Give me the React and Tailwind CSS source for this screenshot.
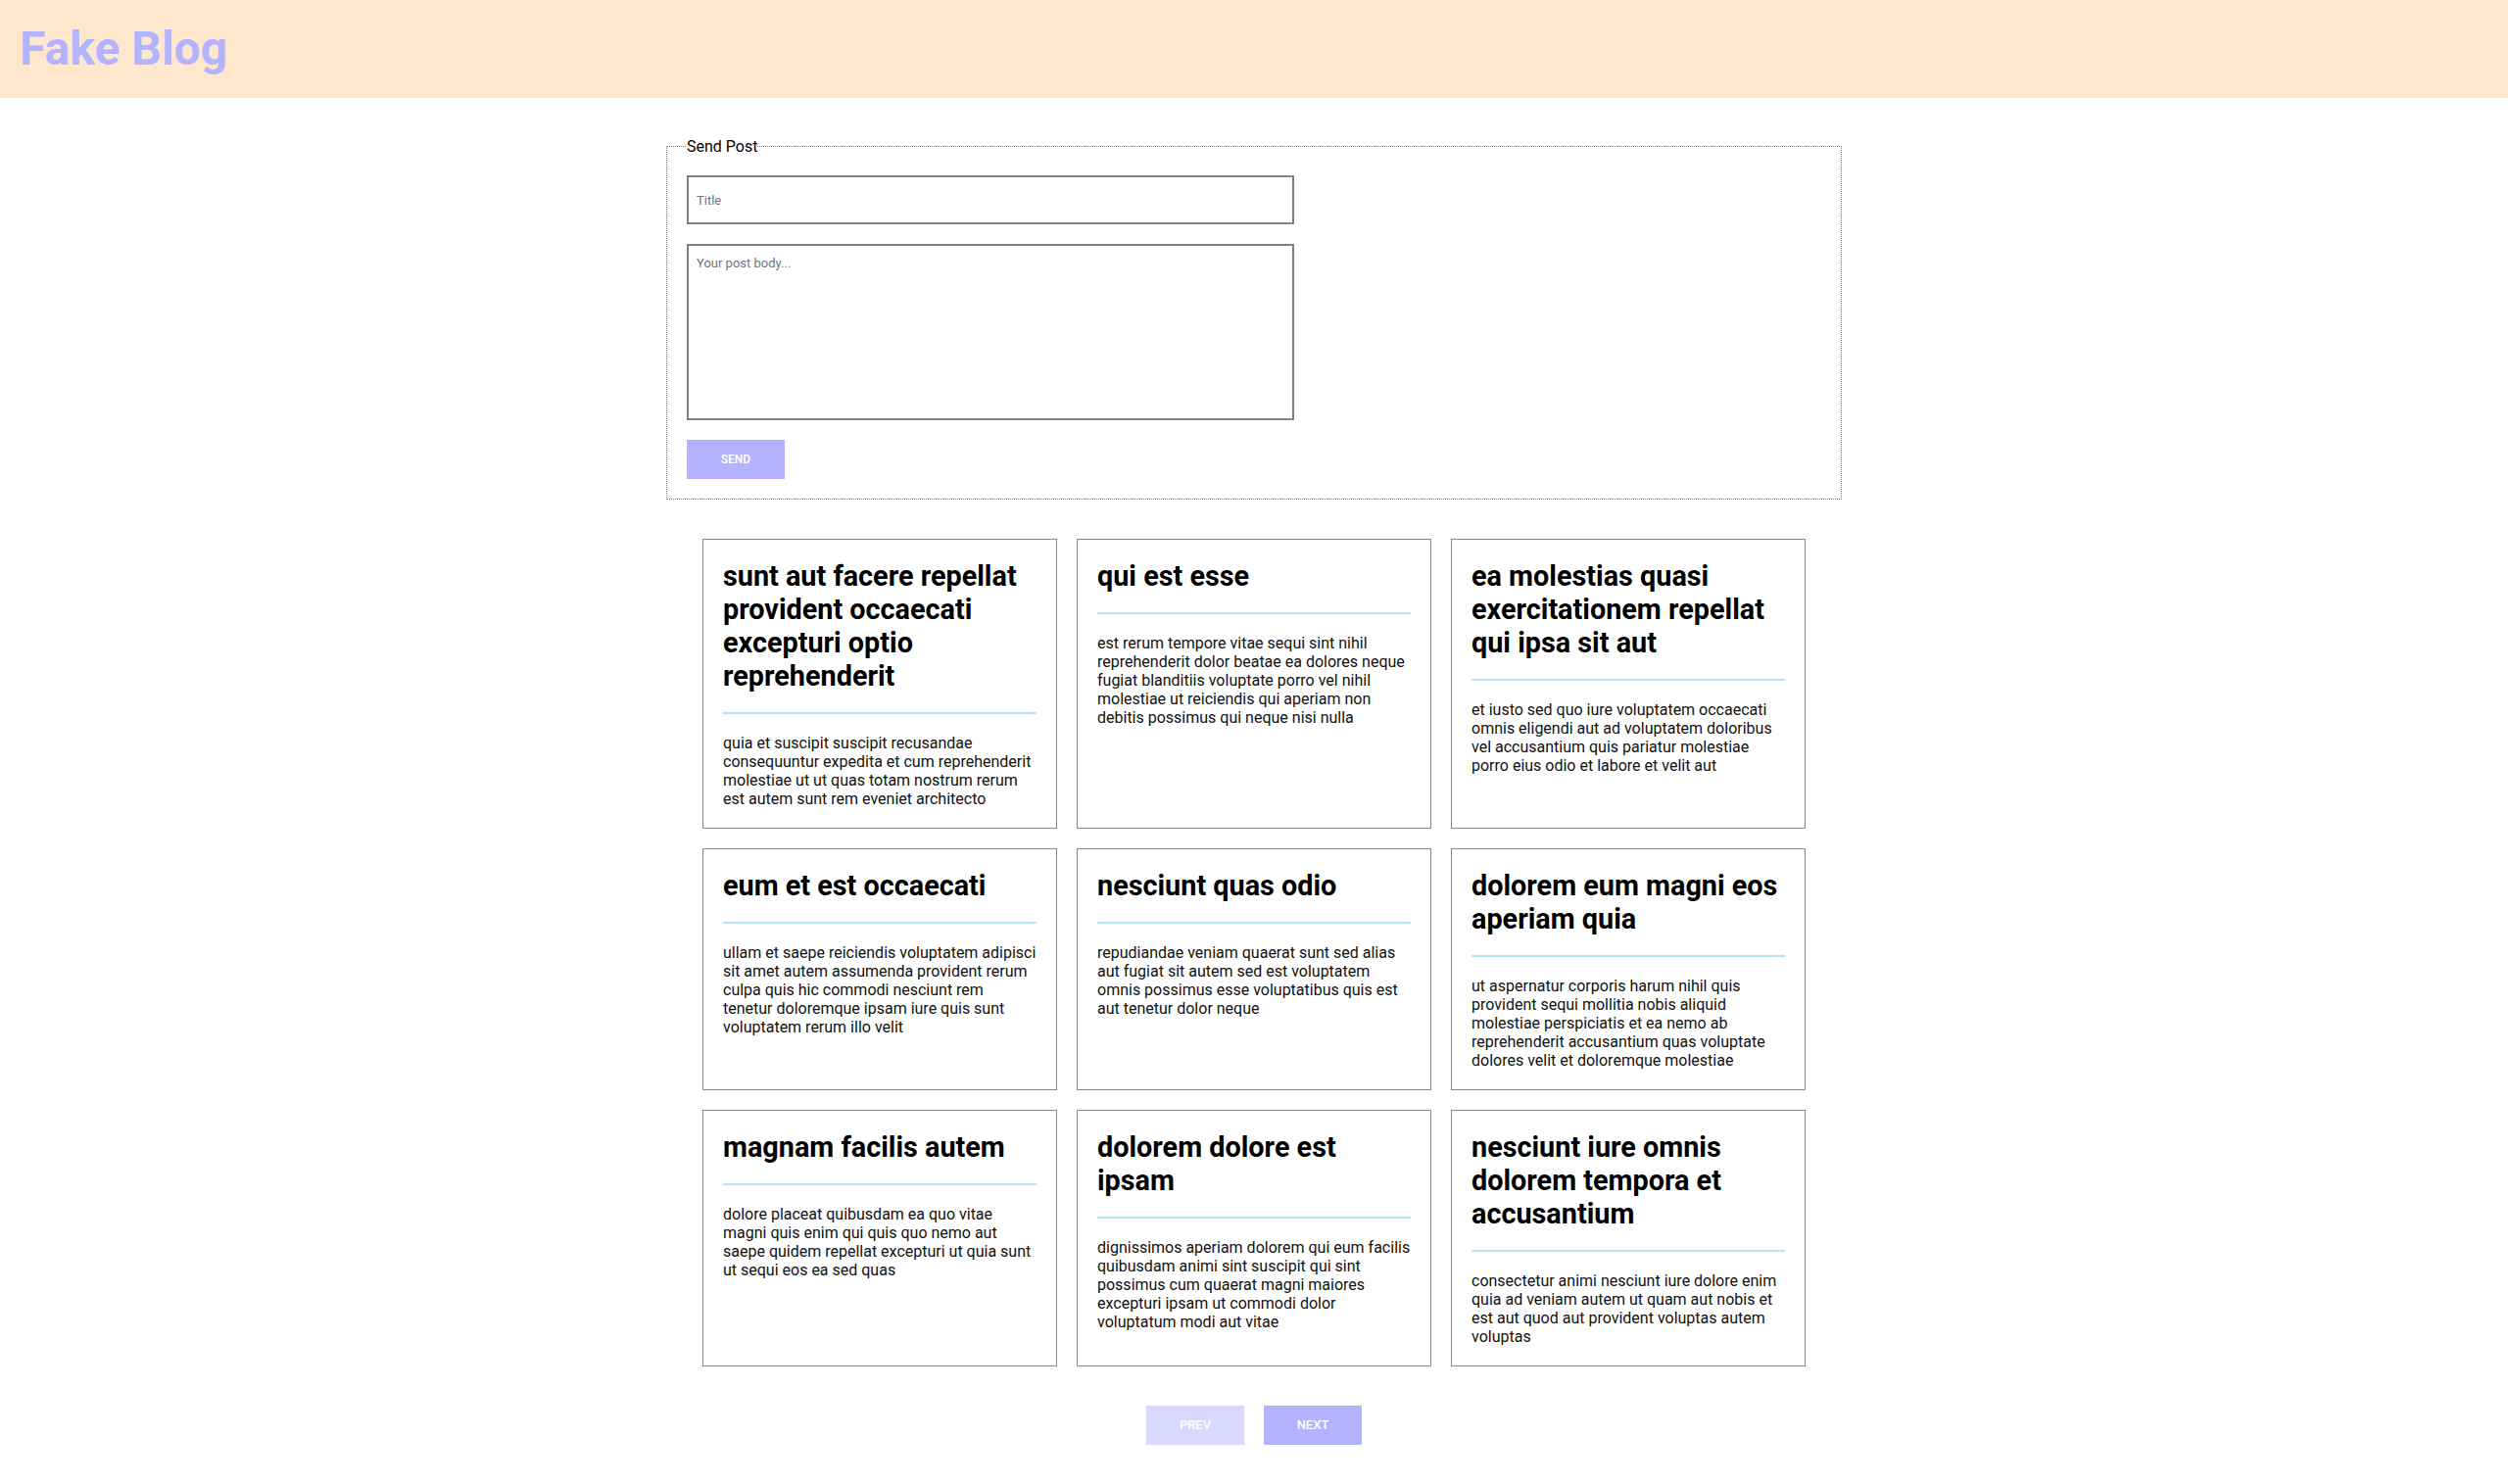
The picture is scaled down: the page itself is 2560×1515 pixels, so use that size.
import React from "react";

const posts = [
	{
		title: "sunt aut facere repellat provident occaecati excepturi optio reprehenderit",
		body: "quia et suscipit suscipit recusandae consequuntur expedita et cum reprehenderit molestiae ut ut quas totam nostrum rerum est autem sunt rem eveniet architecto",
	},
	{
		title: "qui est esse",
		body: "est rerum tempore vitae sequi sint nihil reprehenderit dolor beatae ea dolores neque fugiat blanditiis voluptate porro vel nihil molestiae ut reiciendis qui aperiam non debitis possimus qui neque nisi nulla",
	},
	{
		title: "ea molestias quasi exercitationem repellat qui ipsa sit aut",
		body: "et iusto sed quo iure voluptatem occaecati omnis eligendi aut ad voluptatem doloribus vel accusantium quis pariatur molestiae porro eius odio et labore et velit aut",
	},
	{
		title: "eum et est occaecati",
		body: "ullam et saepe reiciendis voluptatem adipisci sit amet autem assumenda provident rerum culpa quis hic commodi nesciunt rem tenetur doloremque ipsam iure quis sunt voluptatem rerum illo velit",
	},
	{
		title: "nesciunt quas odio",
		body: "repudiandae veniam quaerat sunt sed alias aut fugiat sit autem sed est voluptatem omnis possimus esse voluptatibus quis est aut tenetur dolor neque",
	},
	{
		title: "dolorem eum magni eos aperiam quia",
		body: "ut aspernatur corporis harum nihil quis provident sequi mollitia nobis aliquid molestiae perspiciatis et ea nemo ab reprehenderit accusantium quas voluptate dolores velit et doloremque molestiae",
	},
	{
		title: "magnam facilis autem",
		body: "dolore placeat quibusdam ea quo vitae magni quis enim qui quis quo nemo aut saepe quidem repellat excepturi ut quia sunt ut sequi eos ea sed quas",
	},
	{
		title: "dolorem dolore est ipsam",
		body: "dignissimos aperiam dolorem qui eum facilis quibusdam animi sint suscipit qui sint possimus cum quaerat magni maiores excepturi ipsam ut commodi dolor voluptatum modi aut vitae",
	},
	{
		title: "nesciunt iure omnis dolorem tempora et accusantium",
		body: "consectetur animi nesciunt iure dolore enim quia ad veniam autem ut quam aut nobis et est aut quod aut provident voluptas autem voluptas",
	},
];

const PostCard = ({ title, body }) => (
	<div className="border border-[#888888] bg-white p-5">
		<h2 className="text-[28.8px] leading-[34px] font-bold text-black">{title}</h2>
		<div className="h-[2px] bg-[#b3e5fc] my-5" />
		<p className="text-[16px] leading-[19px] text-[#111111]">{body}</p>
	</div>
);

const App = () => {
	return (
		<div className="min-h-screen bg-white font-['Roboto',sans-serif] text-black">
			<header className="h-[100px] bg-[#ffe7ce] flex items-center px-5">
				<h1 className="text-[48px] font-bold text-[#b3b3ff] leading-none">Fake Blog</h1>
			</header>

			<fieldset className="w-[1200px] mx-auto mt-10 border border-dotted border-[#808080] p-5 flex flex-col gap-5">
				<legend className="text-[16px] leading-[19px] text-black">Send Post</legend>
				<input
					type="text"
					placeholder="Title"
					className="w-[620px] h-[50px] border-2 border-[#808080] px-2 text-[13px] placeholder:text-[#757575] outline-none"
				/>
				<textarea
					placeholder="Your post body..."
					className="w-[620px] h-[180px] border-2 border-[#808080] px-2 py-2 text-[13px] placeholder:text-[#757575] resize-none outline-none"
				/>
				<button className="w-[100px] h-10 bg-[#b3b3ff] text-white text-[12px] font-medium">SEND</button>
			</fieldset>

			<div className="w-[1126px] mx-auto mt-10 grid grid-cols-3 gap-5">
				{posts.map((post, i) => (
					<PostCard key={`post_${i}`} title={post.title} body={post.body} />
				))}
			</div>

			<div className="flex justify-center gap-5 mt-10 pb-10">
				<button className="w-[100px] h-10 bg-[#d9d9ff] text-white text-[13px] font-medium">PREV</button>
				<button className="w-[100px] h-10 bg-[#b3b3ff] text-white text-[13px] font-medium">NEXT</button>
			</div>
		</div>
	);
};

export default App;
